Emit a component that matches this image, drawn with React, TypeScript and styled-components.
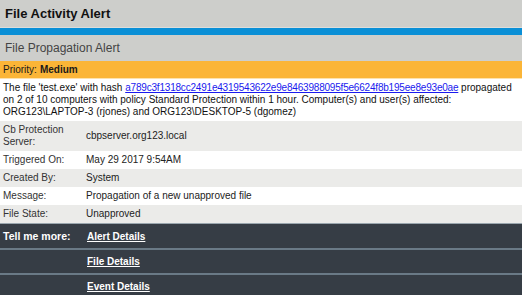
import React from 'react';
import styled, { createGlobalStyle } from 'styled-components';

const GlobalStyle = createGlobalStyle`
    html, body {
        margin: 0;
        padding: 0;
        background: #ffffff;
    }
    body {
        font-family: "Liberation Sans", Arial, sans-serif;
        font-size: 10px;
        color: #111111;
    }
`;

const Page = styled.div`
    width: 522px;
    display: flex;
    flex-direction: column;
`;

const TitleBar = styled.div`
    height: 27px;
    background-color: #cdcecb;
    border-bottom: 1px solid #dcdddb;
    display: flex;
    align-items: center;
    padding-left: 5px;
    font-size: 13px;
    font-weight: bold;
    color: #111111;
`;

const AccentBar = styled.div`
    height: 7px;
    background-color: #0a8fd6;
`;

const SubTitle = styled.div`
    height: 26px;
    background-color: #cdcecb;
    display: flex;
    align-items: center;
    padding-left: 5px;
    font-size: 12px;
    color: #444444;
`;

const PriorityBar = styled.div`
    height: 17px;
    background-color: #fbb537;
    border-bottom: 1px solid #fde2ad;
    display: flex;
    align-items: center;
    padding-left: 3px;
    color: #1a1a1a;

    b {
        font-weight: bold;
        margin-left: 3px;
    }
`;

const Description = styled.div`
    padding: 3px;
    line-height: 12px;
    color: #111111;
`;

const HashLink = styled.a`
    color: #1a1aee;
    text-decoration: underline;
    letter-spacing: -0.2px;
`;

const InfoRow = styled.div<{ striped: boolean }>`
    display: grid;
    grid-template-columns: 83px 1fr;
    align-items: center;
    padding: 3px 3px;
    line-height: 12px;
    min-height: 12px;
    background-color: ${(props) => (props.striped ? '#ebebe9' : '#ffffff')};
`;

const Label = styled.div`
    color: #333333;
    width: 70px;
`;

const Value = styled.div`
    color: #222222;
`;

const MoreSection = styled.div`
    background-color: #363d45;
    border-top: 1px solid #9aa6ae;
`;

const MoreRow = styled.div<{ first: boolean }>`
    display: grid;
    grid-template-columns: 84px 1fr;
    align-items: center;
    height: ${(props) => (props.first ? '24px' : '23px')};
    padding: 0 3px;
    border-top: ${(props) => (props.first ? 'none' : '2px solid #6a7a86')};
    color: #ffffff;
    font-size: 10.5px;
    font-weight: bold;
`;

const MoreLink = styled.a`
    color: #ffffff;
    font-size: 10px;
    text-decoration: underline;
    font-weight: bold;
`;

const infoRows = [
    { label: 'Cb Protection Server:', value: 'cbpserver.org123.local' },
    { label: 'Triggered On:', value: 'May 29 2017 9:54AM' },
    { label: 'Created By:', value: 'System' },
    { label: 'Message:', value: 'Propagation of a new unapproved file' },
    { label: 'File State:', value: 'Unapproved' },
];

const links = ['Alert Details', 'File Details', 'Event Details'];

const App: React.FC = () => {
    return (
        <Page>
            <GlobalStyle />
            <TitleBar>File Activity Alert</TitleBar>
            <AccentBar />
            <SubTitle>File Propagation Alert</SubTitle>
            <PriorityBar>
                Priority:<b>Medium</b>
            </PriorityBar>
            <Description>
                The file 'test.exe' with hash{' '}
                <HashLink href="#">a789c3f1318cc2491e4319543622e9e8463988095f5e6624f8b195ee8e93e0ae</HashLink>{' '}
                propagated on 2 of 10 computers with policy Standard Protection within 1 hour. Computer(s) and
                user(s) affected: ORG123\LAPTOP-3 (rjones) and ORG123\DESKTOP-5 (dgomez)
            </Description>
            {infoRows.map((row, i) => (
                <InfoRow key={row.label} striped={i % 2 === 0}>
                    <Label>{row.label}</Label>
                    <Value>{row.value}</Value>
                </InfoRow>
            ))}
            <MoreSection>
                {links.map((link, i) => (
                    <MoreRow key={link} first={i === 0}>
                        <span>{i === 0 ? 'Tell me more:' : ''}</span>
                        <MoreLink href="#">{link}</MoreLink>
                    </MoreRow>
                ))}
            </MoreSection>
        </Page>
    );
};

export default App;
